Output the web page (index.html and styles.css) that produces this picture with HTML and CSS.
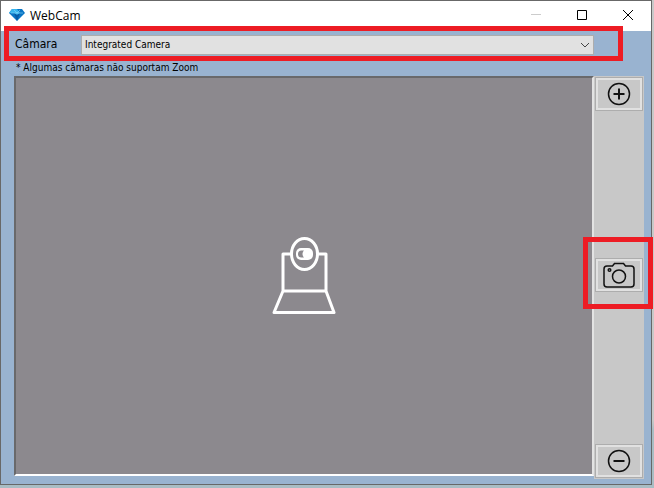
FILE: index.html
```html
<!DOCTYPE html>
<html lang="pt">
<head>
<meta charset="utf-8">
<title>WebCam</title>
<link rel="stylesheet" href="styles.css">
</head>
<body>
<main class="window">
  <header class="titlebar">
    <svg class="logo" viewBox="0 0 16 12" aria-hidden="true">
      <path fill="#0874c4" d="M3 0h10l3 4-8 8-8-8z"/>
      <path fill="#35b4ee" d="M3 0h5L5 4H0zM8 0l3 4-3 2-3-2z"/>
      <path fill="#075aa5" d="M5 4l3 8 3-8-3 2z"/>
      <path fill="none" stroke="#8ad8f8" stroke-width=".6" d="M2 4h12M5 1l3 3 3-3"/>
    </svg>
    <h1 class="title">WebCam</h1>
    <div class="controls">
      <button class="control" aria-label="Minimizar" disabled><svg viewBox="0 0 12 12"><path d="M1 5.5h10"/></svg></button>
      <button class="control" aria-label="Maximizar"><svg viewBox="0 0 12 12"><path d="M1.500 1.500h9v9h-9z"/></svg></button>
      <button class="control" aria-label="Fechar"><svg viewBox="0 0 12 12"><path d="M1 1l10 10M11 1L1 11"/></svg></button>
    </div>
  </header>
  <div class="content">
    <div class="source">
      <label class="source-label" for="camera">Câmara</label>
      <div class="picker">
        <select id="camera"><option>Integrated Camera</option></select>
        <svg class="chevron" viewBox="0 0 10 6" aria-hidden="true"><path d="M1 1l4 4 4-4"/></svg>
      </div>
      <div class="mark mark-source"></div>
    </div>
    <p class="note">* Algumas câmaras não suportam Zoom</p>
    <div class="stage">
      <div class="preview">
        <svg class="webcam" viewBox="0 0 64 78" aria-hidden="true">
          <g fill="none" stroke="#fff" stroke-width="3" stroke-linejoin="round">
            <path d="M19 17h-8v37M46 17h8v37M11 54h43l8 21.500H2z"/>
            <ellipse cx="32.500" cy="17" rx="13" ry="15.500"/>
          </g>
          <rect x="24" y="11" width="17" height="12" rx="5" fill="#fff"/>
          <path fill="#8c898e" d="M32 13.500h-2.500a3.500 3.500 0 0 0 0 7H32c-2-2-2-5 0-7z"/>
        </svg>
      </div>
      <div class="tools">
        <button class="tool" aria-label="Aumentar zoom"><svg class="round" viewBox="0 0 24 24"><circle cx="12" cy="12" r="10.500"/><path class="bold" d="M6.500 12h11M12 6.500v11"/></svg></button>
        <div class="shot">
          <button class="tool" aria-label="Tirar fotografia"><svg class="photo" viewBox="0 0 32 26"><path d="M4 4h5.500l2-2.500h9l2 2.500H28a3 3 0 0 1 3 3v15a3 3 0 0 1-3 3H4a3 3 0 0 1-3-3V7a3 3 0 0 1 3-3z"/><circle cx="16" cy="14.500" r="6.500"/><circle cx="6.500" cy="8" r="1.300"/></svg></button>
          <div class="mark mark-shot"></div>
        </div>
        <button class="tool" aria-label="Diminuir zoom"><svg class="round" viewBox="0 0 24 24"><circle cx="12" cy="12" r="10.500"/><path class="bold" d="M6.500 12h11"/></svg></button>
      </div>
    </div>
  </div>
</main>
</body>
</html>
```
FILE: styles.css
```css
* { box-sizing: border-box; }

body {
  margin: 0;
  height: 100vh;
  padding: 0 2px 3px 0;
  background: linear-gradient(#c9c9c9 420px, #a9bdc4 430px);
  color: #000;
  font-family: "DejaVu Sans Condensed", "DejaVu Sans", sans-serif;
}

.window {
  display: flex;
  flex-direction: column;
  height: 100%;
  border: 1px solid #686868;
  background: #99b3d0;
}

.titlebar {
  display: flex;
  align-items: center;
  height: 30px;
  padding-left: 8px;
  background: #fff;
}

.logo {
  width: 16px;
  height: 12px;
  margin-bottom: 2px;
}

.title {
  margin: 0 auto 0 5px;
  font: 400 12px/16px "Open Sans", sans-serif;
}

.controls { display: flex; }

.control {
  display: grid;
  place-items: center;
  width: 46px;
  height: 28px;
  margin-bottom: 2px;
  padding: 0;
  border: 0;
  background: transparent;
}

.control svg {
  width: 12px;
  height: 12px;
  fill: none;
  stroke: #000;
}

.control:disabled svg { stroke: #ccc; }

.content {
  display: flex;
  flex: 1;
  flex-direction: column;
  min-height: 0;
  padding: 4px 7px 5px 13px;
}

.source {
  position: relative;
  display: flex;
  height: 20px;
  padding-right: 50px;
}

.source-label {
  width: 67px;
  padding-left: 1px;
  font-size: 12px;
  line-height: 18px;
}

.picker { position: relative; flex: 1; }

.picker select {
  display: block;
  width: 100%;
  height: 20px;
  margin: 0;
  padding: 0 3px;
  border: 1px solid #adadad;
  border-radius: 0;
  appearance: none;
  background: #e1e1e1;
  color: #000;
  font: 10px/18px "DejaVu Sans Condensed", "DejaVu Sans", sans-serif;
}

.chevron {
  position: absolute;
  top: 7px;
  right: 4px;
  width: 10px;
  height: 6px;
  fill: none;
  stroke: #444;
  pointer-events: none;
}

.mark {
  position: absolute;
  z-index: 1;
  border: 5px solid #ed1c24;
  pointer-events: none;
}

.mark-source { inset: -9px 21px -6px -10px; }

.mark-shot { inset: -21px -10px -17px -12px; }

.note {
  margin: 6px 0 1px;
  padding-left: 2px;
  font-size: 10px;
  line-height: 14px;
}

.stage {
  display: flex;
  flex: 1;
  min-height: 0;
}

.preview {
  display: grid;
  flex: 1;
  place-items: center;
  margin-bottom: 3px;
  border: 2px solid;
  border-color: #69696b #e3e3e3 #fff #69696b;
  background: #8c898e;
}

.webcam { width: 64px; height: 78px; }

.tools {
  display: flex;
  flex-direction: column;
  justify-content: space-between;
  width: 50px;
  padding: 1px 1px 1px 1px;
  background: #c8c8c8;
}

.tool {
  display: grid;
  place-items: center;
  width: 100%;
  height: 34px;
  padding: 0;
  border: 1px solid #adadad;
  background: #c8c8c8;
  box-shadow: inset 0 0 0 2px #e1e1e1;
}

.tool svg {
  fill: none;
  stroke: #111;
  stroke-width: 1.5;
}

.tool .bold { stroke-width: 2; }

.round { width: 24px; height: 24px; }

.photo { width: 32px; height: 26px; }

.shot { position: relative; margin-bottom: 5px; }
```
